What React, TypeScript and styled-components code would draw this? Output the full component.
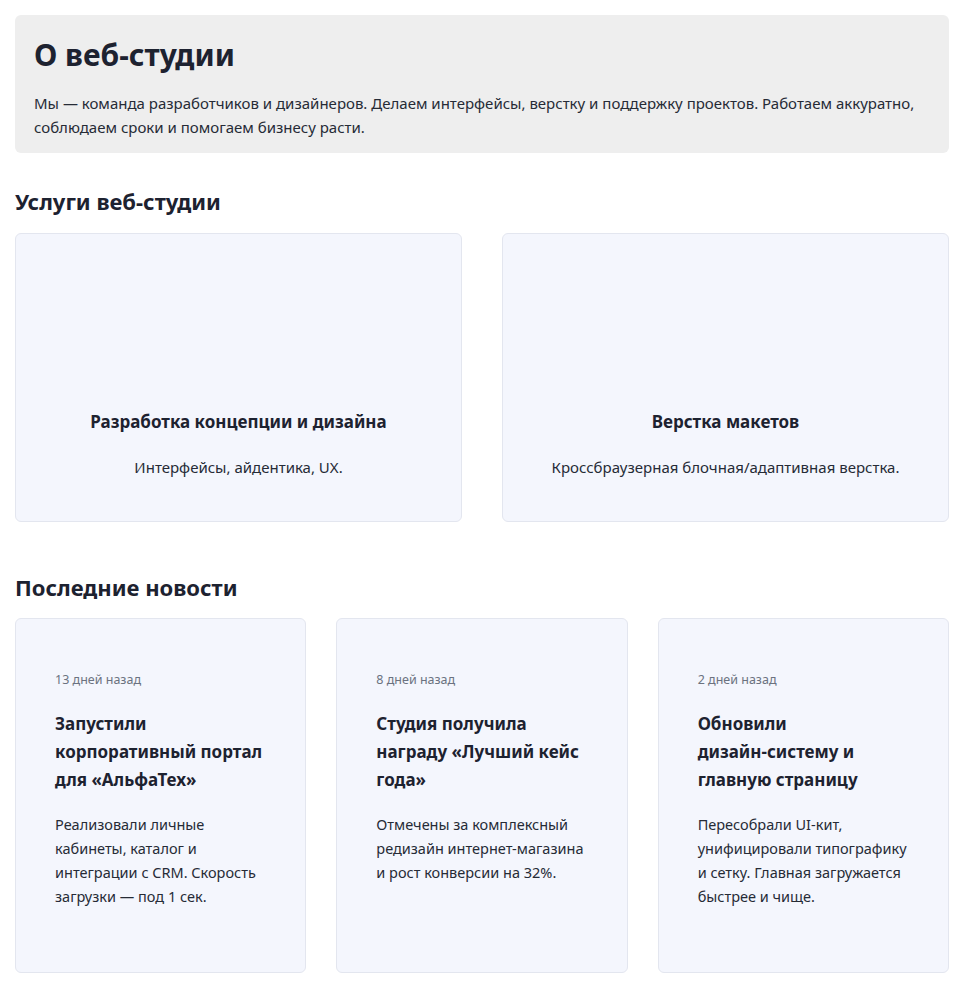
import React from "react";
import styled, {createGlobalStyle} from "styled-components";

const NoWrap = styled.span`
  white-space: nowrap;
`;

const services = [
  {title: "Разработка концепции и дизайна", text: "Интерфейсы, айдентика, UX."},
  {title: "Верстка макетов", text: "Кроссбраузерная блочная/адаптивная верстка."},
];

const news = [
  {
    date: "13 дней назад",
    title: <>Запустили корпоративный портал для «АльфаТех»</>,
    text: "Реализовали личные кабинеты, каталог и интеграции с CRM. Скорость загрузки — под 1 сек.",
  },
  {
    date: "8 дней назад",
    title: <>Студия получила награду «Лучший кейс года»</>,
    text: "Отмечены за комплексный редизайн интернет-магазина и рост конверсии на 32%.",
  },
  {
    date: "2 дней назад",
    title: (
      <>
        Обновили <NoWrap>дизайн-систему</NoWrap> и главную страницу
      </>
    ),
    text: "Пересобрали UI-кит, унифицировали типографику и сетку. Главная загружается быстрее и чище.",
  },
];

export default function App() {
  return (
    <>
      <GlobalStyle />
      <Page>
        <About>
          <AboutTitle>О веб-студии</AboutTitle>
          <AboutText>
            Мы — команда разработчиков и дизайнеров. Делаем интерфейсы, верстку и поддержку проектов.
            Работаем аккуратно, соблюдаем сроки и помогаем бизнесу расти.
          </AboutText>
        </About>

        <SectionTitle $top={33} $bottom={17}>Услуги веб-студии</SectionTitle>
        <ServiceGrid>
          {services.map((s) => (
            <ServiceCard key={s.title}>
              <ServiceTitle>{s.title}</ServiceTitle>
              <ServiceText>{s.text}</ServiceText>
            </ServiceCard>
          ))}
        </ServiceGrid>

        <SectionTitle $top={50} $bottom={16}>Последние новости</SectionTitle>
        <NewsGrid>
          {news.map((n) => (
            <NewsCard key={n.date}>
              <NewsDate>{n.date}</NewsDate>
              <NewsTitle>{n.title}</NewsTitle>
              <NewsText>{n.text}</NewsText>
            </NewsCard>
          ))}
        </NewsGrid>
      </Page>
    </>
  );
}

const GlobalStyle = createGlobalStyle`
  body {
    margin: 0;
    background: #ffffff;
    font-family: "Noto Sans", "Open Sans", sans-serif;
    color: #1d2230;
  }
`;

const Page = styled.div`
  padding: 15px 15px 16px;
`;

const About = styled.section`
  background: #eeeeee;
  border-radius: 6px;
  padding: 19px 19px 14px;
`;

const AboutTitle = styled.h1`
  margin: 0 0 15px;
  font-size: 30px;
  line-height: 42px;
  font-weight: 700;
`;

const AboutText = styled.p`
  margin: 0;
  font-size: 15px;
  line-height: 24px;
  color: #262b36;
`;

const SectionTitle = styled.h2<{$top: number; $bottom: number}>`
  margin: ${(p) => p.$top}px 0 ${(p) => p.$bottom}px;
  font-size: 22px;
  line-height: 30px;
  font-weight: 700;
`;

const ServiceGrid = styled.div`
  display: grid;
  grid-template-columns: 1fr 1fr;
  gap: 40px;
`;

const ServiceCard = styled.div`
  height: 289px;
  box-sizing: border-box;
  background: #f4f6fd;
  border: 1px solid #e3e6ef;
  border-radius: 6px;
  display: flex;
  flex-direction: column;
  justify-content: flex-end;
  align-items: center;
  padding: 0 20px 42px;
  text-align: center;
`;

const ServiceTitle = styled.h3`
  margin: 0 0 20px;
  font-size: 17px;
  line-height: 26px;
  font-weight: 700;
`;

const ServiceText = styled.p`
  margin: 0;
  font-size: 15px;
  line-height: 24px;
  color: #262b36;
`;

const NewsGrid = styled.div`
  display: grid;
  grid-template-columns: repeat(3, 1fr);
  gap: 30px;
`;

const NewsCard = styled.article`
  height: 355px;
  box-sizing: border-box;
  background: #f4f6fd;
  border: 1px solid #e3e6ef;
  border-radius: 6px;
  padding: 51px 39px 40px;
`;

const NewsDate = styled.div`
  font-size: 12.5px;
  line-height: 20px;
  color: #6b7280;
  margin-bottom: 20px;
`;

const NewsTitle = styled.h3`
  margin: 0 0 18px;
  font-size: 17px;
  line-height: 28px;
  font-weight: 700;
`;

const NewsText = styled.p`
  margin: 0;
  font-size: 14.5px;
  line-height: 24px;
  color: #262b36;
`;
